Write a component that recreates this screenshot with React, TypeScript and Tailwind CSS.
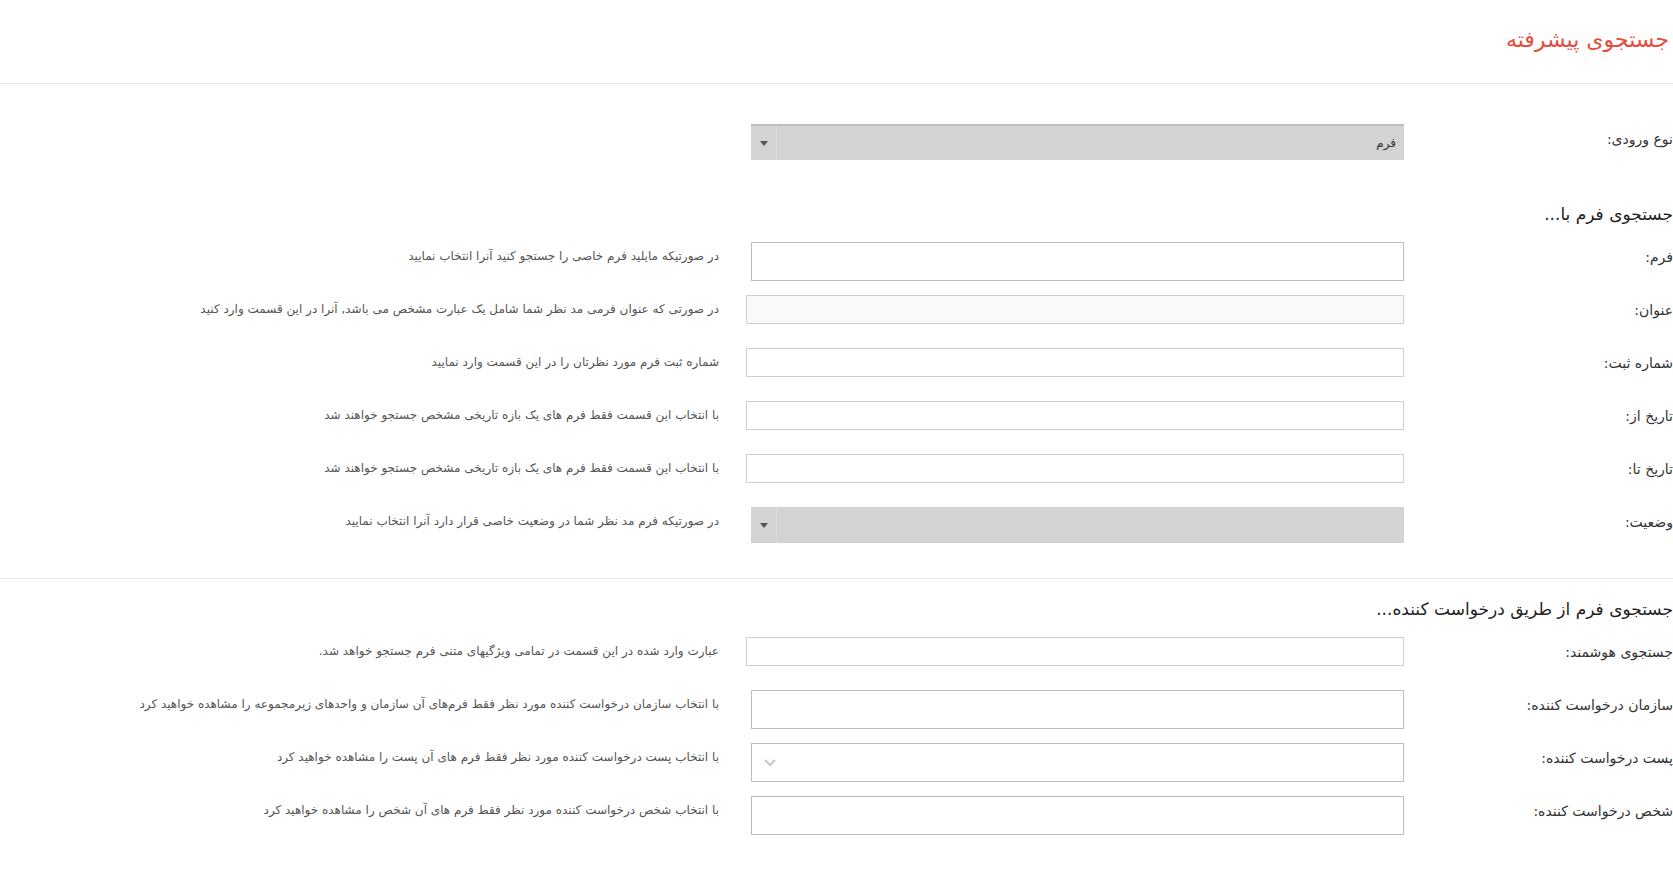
import React from "react";

function Arrow() {
  return (
    <svg width="8" height="5" viewBox="0 0 8 5" className="block">
      <path d="M0 0 L8 0 L4 5 Z" fill="#555" />
    </svg>
  );
}

function GraySelect({ value }: { value?: string }) {
  return (
    <div className="flex h-[36px] w-[653px] border-t-2 border-[#bdbdbd] bg-[#d3d3d3]">
      <div className="flex flex-1 items-center pr-[8px] text-[12px] text-[#333]">{value}</div>
      <div className="flex w-[26px] items-center justify-center border-r border-[#dcdcdc]">
        <Arrow />
      </div>
    </div>
  );
}

function Row({
  label,
  help,
  children,
}: {
  label: string;
  help?: string;
  children: React.ReactNode;
}) {
  return (
    <div className="flex h-[53px] items-start">
      <div className="w-[269px] shrink-0 pt-[5px] text-[14px] leading-[20px] text-[#333]">{label}</div>
      <div className="w-[658px] shrink-0">{children}</div>
      <div className="flex-1 pr-[27px] pt-[5px] text-[12px] leading-[18px] text-[#555]">{help}</div>
    </div>
  );
}

const bigInput = "h-[39px] w-[653px] border border-[#bcbcbc] bg-white";
const smallInput = "h-[29px] w-[658px] border border-[#cfcfcf] bg-white";

export default function App() {
  return (
    <div dir="rtl" className="min-h-screen overflow-hidden bg-white font-['DejaVu_Sans',sans-serif]">
      <div className="h-[84px] border-b border-[#e5e5e5] pr-[4px] pt-[24px]">
        <h1 className="text-[22px] leading-[32px] font-normal text-[#e74c3c]">جستجوی پیشرفته</h1>
      </div>

      <div className="pt-[40px]">
        <div className="flex h-[36px] items-start">
          <div className="w-[269px] shrink-0 pt-[5px] text-[14px] leading-[20px] text-[#333]">نوع ورودی:</div>
          <GraySelect value="فرم" />
        </div>

        <h2 className="mt-[42px] mb-[16px] text-[17px] leading-[24px] text-[#222]">جستجوی فرم با...</h2>

        <Row label="فرم:" help="در صورتیکه مایلید فرم خاصی را جستجو کنید آنرا انتخاب نمایید">
          <div className={bigInput} />
        </Row>
        <Row label="عنوان:" help="در صورتی که عنوان فرمی مد نظر شما شامل یک عبارت مشخص می باشد, آنرا در این قسمت وارد کنید">
          <div className="h-[29px] w-[658px] border border-[#cfcfcf] bg-[#f9f9f9]" />
        </Row>
        <Row label="شماره ثبت:" help="شماره ثبت فرم مورد نظرتان را در این قسمت وارد نمایید">
          <div className={smallInput} />
        </Row>
        <Row label="تاریخ از:" help="با انتخاب این قسمت فقط فرم های یک بازه تاریخی مشخص جستجو خواهند شد">
          <div className={smallInput} />
        </Row>
        <Row label="تاریخ تا:" help="با انتخاب این قسمت فقط فرم های یک بازه تاریخی مشخص جستجو خواهند شد">
          <div className={smallInput} />
        </Row>
        <Row label="وضعیت:" help="در صورتیکه فرم مد نظر شما در وضعیت خاصی قرار دارد آنرا انتخاب نمایید">
          <div className="flex h-[36px] w-[653px] bg-[#d3d3d3]">
            <div className="flex-1" />
            <div className="flex w-[26px] items-center justify-center border-r border-[#dcdcdc]">
              <Arrow />
            </div>
          </div>
        </Row>

        <div className="mt-[18px] border-t border-[#e5e5e5]" />

        <h2 className="mt-[18px] mb-[16px] text-[17px] leading-[24px] text-[#222]">
          جستجوی فرم از طریق درخواست کننده...
        </h2>

        <Row label="جستجوی هوشمند:" help="عبارت وارد شده در این قسمت در تمامی ویژگیهای متنی فرم جستجو خواهد شد.">
          <div className={smallInput} />
        </Row>
        <Row
          label="سازمان درخواست کننده:"
          help="با انتخاب سازمان درخواست کننده مورد نظر فقط فرم‌های آن سازمان و واحدهای زیرمجموعه را مشاهده خواهید کرد"
        >
          <div className={bigInput} />
        </Row>
        <Row label="پست درخواست کننده:" help="با انتخاب پست درخواست کننده مورد نظر فقط فرم های آن پست را مشاهده خواهید کرد">
          <div className={`${bigInput} flex items-center justify-end pl-[12px]`}>
            <svg width="12" height="8" viewBox="0 0 12 8">
              <path d="M1 1 L6 6 L11 1" fill="none" stroke="#c8c8c8" strokeWidth="2" />
            </svg>
          </div>
        </Row>
        <Row label="شخص درخواست کننده:" help="با انتخاب شخص درخواست کننده مورد نظر فقط فرم های آن شخص را مشاهده خواهید کرد">
          <div className={bigInput} />
        </Row>
      </div>
    </div>
  );
}
